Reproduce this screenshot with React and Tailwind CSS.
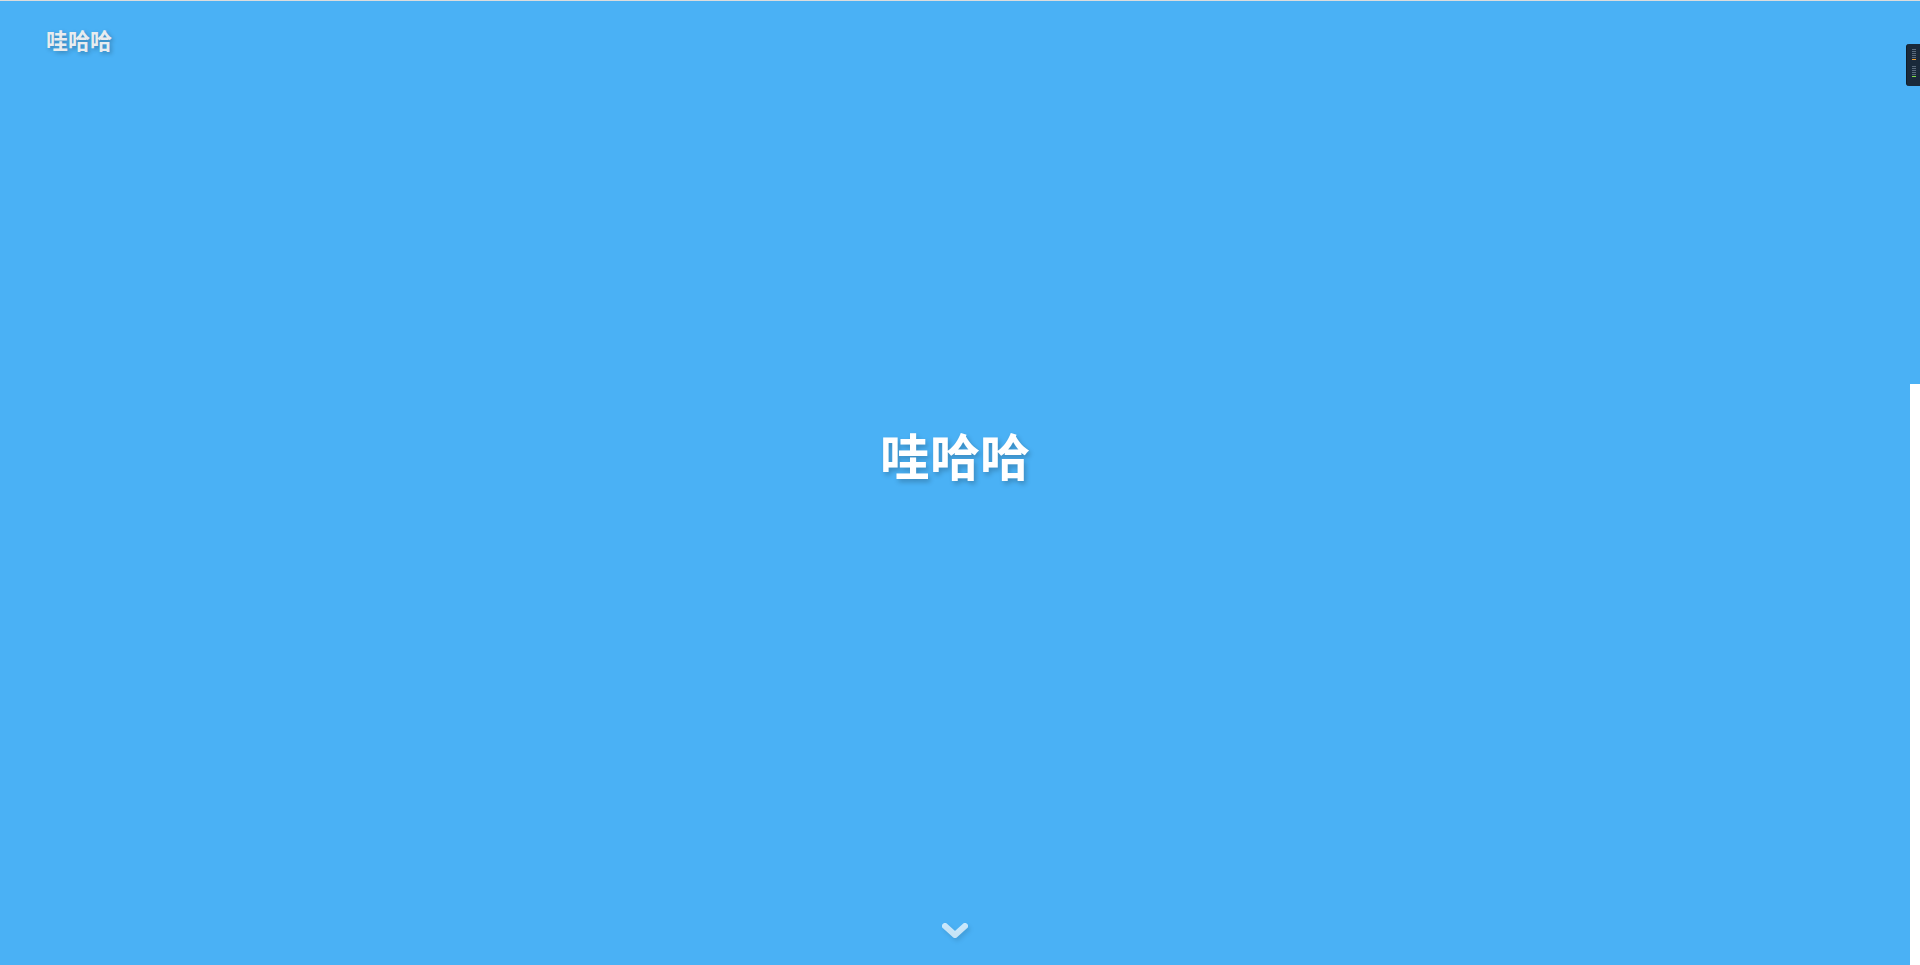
import React from 'react';

const cjk = {fontFamily: '"Noto Sans CJK SC", "Noto Sans", sans-serif'};

const Meter = () => (
    <div className="absolute right-0 top-[43px] w-[14px] h-[42px] rounded-l-[3px] bg-[#1a2a3a] border-l border-[#0f1c28] flex flex-col items-center pt-[5px] pl-[1px]">
        {['g', 'g', 'g', 'g', 'g', 'o'].map((c, i) => (
            <div key={i} className={`w-[4px] h-px mb-px ${c === 'o' ? 'bg-[#f0a030]' : 'bg-[#5a6b7c]'}`}/>
        ))}
        <div className="h-[5px]"/>
        {['g', 'g', 'g', 'g', 'g', 'l'].map((c, i) => (
            <div key={i} className={`w-[4px] h-px mb-px ${c === 'l' ? 'bg-[#7ee04a]' : 'bg-[#5a6b7c]'}`}/>
        ))}
    </div>
);

const App = () => {
    return (
        <div className="w-full h-[965px] overflow-hidden flex flex-col bg-white" style={cjk}>
            <div className="h-px w-full bg-[#dcdcdc]"/>
            <div className="flex flex-1 relative">
                <div className="flex-1 bg-[#4ab1f5] flex flex-col items-center">
                    <div className="w-full h-[56px] pl-[46px] pt-[23px]">
                        <span className="text-[22px] leading-[30px] font-bold text-[#e8ecef] [text-shadow:2px_2px_4px_rgba(0,0,0,0.25)]">哇哈哈</span>
                    </div>
                    <h1 className="mt-[372px] text-[50px] leading-[50px] font-bold text-white [text-shadow:2px_3px_5px_rgba(0,0,0,0.22)]">哇哈哈</h1>
                    <svg className="mt-[443px] [filter:drop-shadow(2px_3px_2px_rgba(0,0,0,0.15))]" width="28" height="18" viewBox="0 0 28 18">
                        <polyline points="4,4 14,13 24,4" fill="none" stroke="rgba(255,255,255,0.7)" strokeWidth="6" strokeLinecap="round" strokeLinejoin="round"/>
                    </svg>
                </div>
                <div className="w-[10px] flex flex-col">
                    <div className="h-[383px] bg-[#4ab1f5]"/>
                    <div className="flex-1 bg-white"/>
                </div>
                <Meter/>
            </div>
        </div>
    );
};

export default App;
